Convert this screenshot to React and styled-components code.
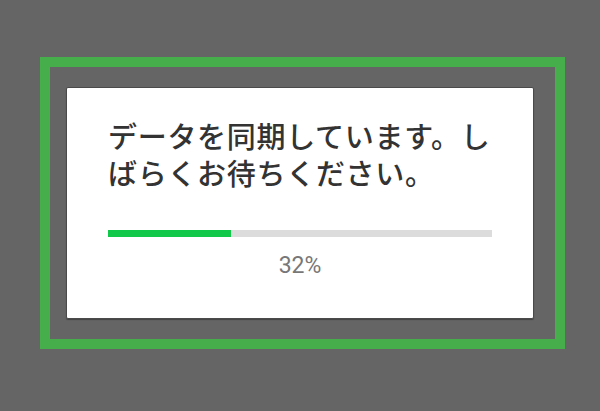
import React from "react";
import styled, { createGlobalStyle } from "styled-components";

const Global = createGlobalStyle`
  html, body { margin: 0; padding: 0; background: #656565; }
  body { font-family: "Noto Sans CJK JP", "Noto Sans", sans-serif; }
`;

const Page = styled.div`
  width: 600px;
  height: 411px;
  padding: 57px 0 0 40px;
  box-sizing: border-box;
`;

const Frame = styled.div`
  width: 525px;
  height: 292px;
  box-sizing: border-box;
  border: 10px solid #47ae4c;
  padding: 20px 21px 20px 16px;
  display: flex;
`;

const Card = styled.div`
  flex: 1;
  background: #fff;
  border: 1px solid #4a4a4a;
  border-radius: 2px;
  box-shadow: 0 1px 1px rgba(0, 0, 0, 0.35);
  padding: 29px 41px 0 41px;
  display: flex;
  flex-direction: column;
`;

const Message = styled.p`
  margin: 0;
  font-size: 29px;
  line-height: 37px;
  letter-spacing: 0.7px;
  font-weight: 500;
  color: #333;
`;

const Track = styled.div`
  margin-top: 39px;
  height: 7px;
  background: #dcdcdc;
`;

const Fill = styled.div`
  height: 100%;
  background: #11c84b;
`;

const Percent = styled.div`
  margin-top: 15px;
  text-align: center;
  font-family: Roboto, "Noto Sans", sans-serif;
  font-size: 23px;
  line-height: 28px;
  color: #777;
`;

export default function App() {
  const progress = 32;
  return (
    <Page>
      <Global />
      <Frame>
        <Card>
          <Message>データを同期しています。しばらくお待ちください。</Message>
          <Track>
            <Fill style={{ width: `${progress}%` }} />
          </Track>
          <Percent>{progress}%</Percent>
        </Card>
      </Frame>
    </Page>
  );
}
